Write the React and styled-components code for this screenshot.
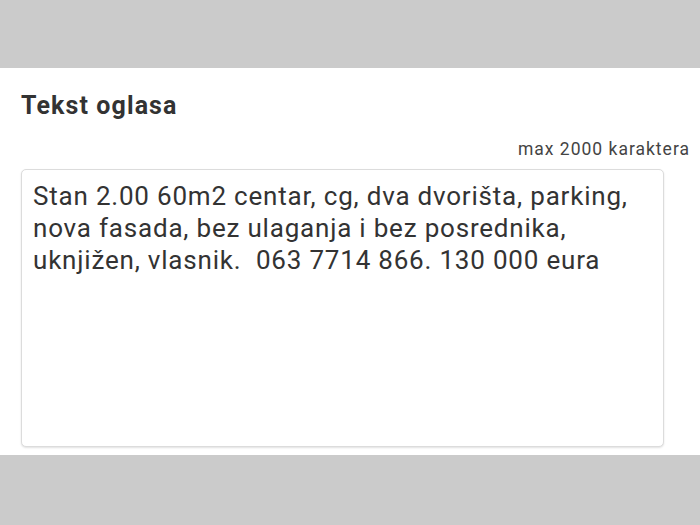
import styled, { createGlobalStyle } from "styled-components";

const Global = createGlobalStyle`
  html, body {
    margin: 0;
    padding: 0;
    background: #cbcbcb;
    font-family: Roboto, "Noto Sans", sans-serif;
  }
`;

const Page = styled.div`
  width: 700px;
  height: 525px;
  display: flex;
  flex-direction: column;
  background: #cbcbcb;
`;

const Band = styled.div`
  height: ${(p) => p.h}px;
  flex-shrink: 0;
`;

const Panel = styled.section`
  height: 387px;
  background: #fff;
  padding: 22px 10px 0 21px;
  box-sizing: border-box;
  display: flex;
  flex-direction: column;
`;

const Title = styled.h2`
  margin: 0;
  font-size: 25px;
  letter-spacing: 1.1px;
  font-weight: 700;
  color: #333;
  line-height: 32px;
`;

const Hint = styled.div`
  align-self: flex-end;
  margin-top: 17px;
  font-size: 17.5px;
  letter-spacing: 1px;
  color: #444;
  line-height: 20px;
`;

const Area = styled.textarea`
  margin-top: 10px;
  width: 643px;
  height: 278px;
  box-sizing: border-box;
  border: 1.5px solid #dcdcdc;
  border-radius: 5px;
  box-shadow: 0 1px 2px rgba(0, 0, 0, 0.12);
  padding: 10px 11px;
  font-family: Roboto, "Noto Sans", sans-serif;
  font-size: 26px;
  letter-spacing: 0.8px;
  line-height: 32px;
  color: #333;
  resize: none;
  outline: none;
`;

export default function App() {
  return (
    <Page>
      <Global />
      <Band h={68} />
      <Panel>
        <Title>Tekst oglasa</Title>
        <Hint>max 2000 karaktera</Hint>
        <Area
          readOnly
          defaultValue={
            "Stan 2.00 60m2 centar, cg, dva dvorišta, parking, nova fasada, bez ulaganja i bez posrednika, uknjižen, vlasnik.  063 7714 866. 130 000 eura"
          }
        />
      </Panel>
    </Page>
  );
}
